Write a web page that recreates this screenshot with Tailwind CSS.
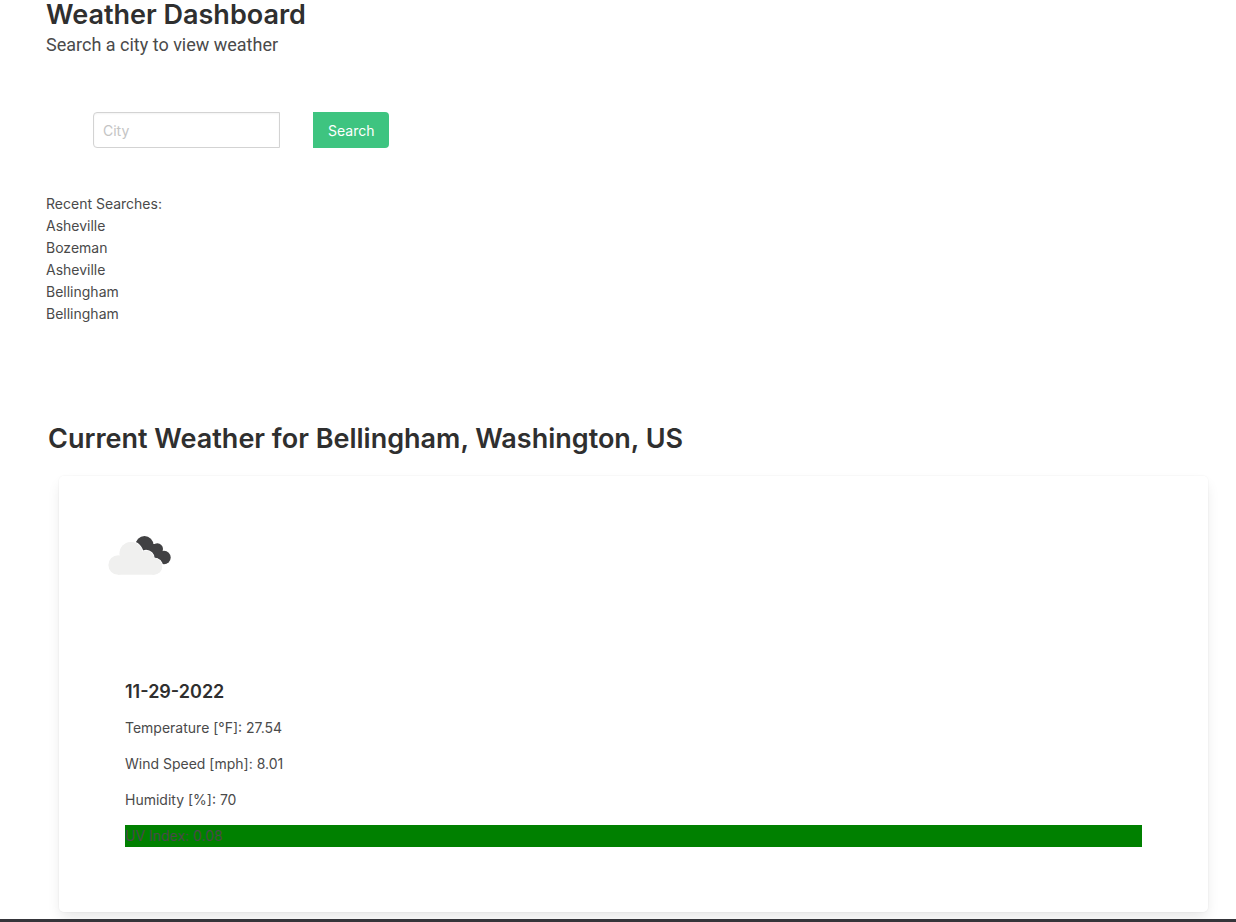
<!DOCTYPE html>
<html lang="en">
<head>
<meta charset="utf-8">
<title>Weather Dashboard</title>
<script src="https://cdn.jsdelivr.net/npm/@tailwindcss/browser@4"></script>
</head>
<body class="min-h-screen bg-white font-['Inter',sans-serif] text-sm text-[#4a4a4a] flex flex-col">
<header class="px-[46px]">
  <h1 class="text-[27px] leading-[30px] font-semibold text-[#2f2f2f]">Weather Dashboard</h1>
  <p class="font-['Roboto',sans-serif] text-lg leading-[30px]">Search a city to view weather</p>
</header>
<main class="flex-1 pb-[7px]">
  <form class="mt-[52px] ml-[93px] flex gap-[33px]">
    <input type="text" aria-label="City" placeholder="City" class="h-9 w-[187px] rounded-l border border-[#d3d3d3] px-[9px] text-sm shadow-[inset_0_1px_2px_rgba(10,10,10,0.05)] placeholder:text-[#c4c4c4]">
    <button type="button" class="h-9 rounded-r bg-[#3ec480] px-[15px] pt-[2px] text-sm text-white">Search</button>
  </form>
  <section class="mt-[45px] px-[46px] leading-[22px]">
    <h2>Recent Searches:</h2>
    <ul>
      <li>Asheville</li>
      <li>Bozeman</li>
      <li>Asheville</li>
      <li>Bellingham</li>
      <li>Bellingham</li>
    </ul>
  </section>
  <section class="mt-[98px]">
    <h2 class="px-12 text-[27px] leading-8 font-semibold text-[#2f2f2f]">Current Weather for Bellingham, Washington, US</h2>
    <article class="mt-[21px] mr-7 ml-[59px] rounded-[5px] px-[66px] pb-[65px] pt-[60px] shadow-[0_7px_14px_-2px_rgba(10,10,10,0.1),0_0_0_1px_rgba(10,10,10,0.02)]">
      <svg class="-ml-4 h-[39px] w-[62px] overflow-visible" viewBox="0 0 62 39" role="img" aria-label="Broken clouds">
        <g fill="#414143">
          <circle cx="35.5" cy="9" r="9"/>
          <circle cx="48.3" cy="13" r="5.7"/>
          <circle cx="55" cy="21.5" r="6.7"/>
          <path d="M36 8L48 8L55 18L53 28L40 22Z"/>
        </g>
        <g fill="#f0f0ef" stroke="#fff" stroke-width="1.2">
          <circle cx="22" cy="17.5" r="11.8"/>
          <circle cx="37" cy="22.5" r="8.1"/>
          <circle cx="45" cy="30.5" r="8.5"/>
        </g>
        <g fill="#f0f0ef">
          <circle cx="9.2" cy="29" r="9.8"/>
          <circle cx="22" cy="17.5" r="11.5"/>
          <circle cx="37" cy="22.5" r="7.8"/>
          <circle cx="45" cy="30.5" r="8.2"/>
          <path d="M9 38.8V24L22 14L37 20L45 28V38.8Z"/>
        </g>
      </svg>
      <h3 class="mt-[106px] text-lg leading-[22px] font-semibold text-[#2f2f2f]">11-29-2022</h3>
      <div class="mt-[14px] flex flex-col gap-[14px] leading-[22px]">
        <p>Temperature [°F]: 27.54</p>
        <p>Wind Speed [mph]: 8.01</p>
        <p>Humidity [%]: 70</p>
        <p class="bg-[#008000]">UV Index: 0.08</p>
      </div>
    </article>
  </section>
</main>
<div class="h-[3px] bg-[#35353a]"></div>
</body>
</html>
